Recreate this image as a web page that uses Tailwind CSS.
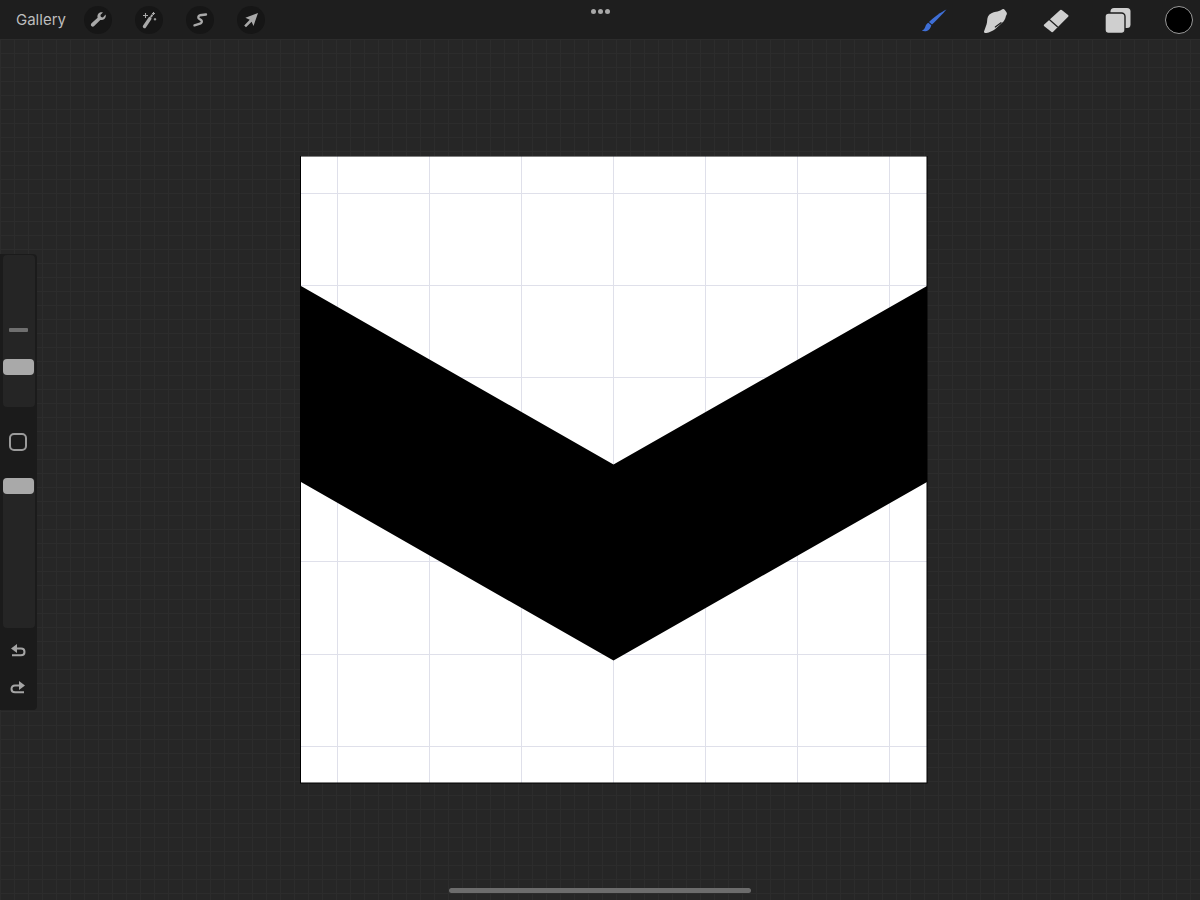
<!DOCTYPE html>
<html lang="en">
<head>
    <meta charset="UTF-8">
    <title>Procreate canvas</title>
    <script src="https://cdn.jsdelivr.net/npm/@tailwindcss/browser@4"></script>
</head>
<body class="antialiased">
<div class="relative w-[1200px] h-[900px] overflow-hidden flex flex-col bg-[#262626] font-['Inter','Liberation_Sans',sans-serif]">

    <!-- Top bar -->
    <header class="h-[39px] shrink-0 bg-[#1e1e1e] grid grid-cols-[1fr_auto_1fr] items-center px-[16px]">
        <div class="flex items-center">
            <span class="text-[15px] leading-none text-[#bdbdbd] w-[68px]">Gallery</span>
            <div class="flex gap-[23px]">
                <span class="w-[28px] h-[28px] rounded-full bg-[#161616] flex items-center justify-center">
                    <svg width="18" height="18" viewBox="0 0 18 18"><path fill="#a9a9a9" d="M16.600 3.600c.5 1.700 0 3.400-1.300 4.500-1.100 1-2.600 1.200-4 .8L5.200 15c-.8.8-2 .9-2.800.1-.8-.8-.7-2 .1-2.800L8.600 6.700c-.4-1.400-.1-3 .9-4.100 1.100-1.200 2.800-1.700 4.400-1.200l-2.500 2.500.5 2 2 .5z"/></svg>
                </span>
                <span class="w-[28px] h-[28px] rounded-full bg-[#161616] flex items-center justify-center">
                    <svg width="18" height="18" viewBox="0 0 18 18"><path stroke="#a9a9a9" stroke-width="3.400" stroke-linecap="round" d="M4.500 15.500 9.800 7.600"/><path stroke="#a9a9a9" stroke-width="2" stroke-linecap="round" d="M11.200 5.500 12 4.300"/><path stroke="#a9a9a9" stroke-width="1.100" d="M5.500 2v5M3 4.500h5M13.500 1v3M12 2.500h3M15 7v2.400M13.800 8.200h2.400"/></svg>
                </span>
                <span class="w-[28px] h-[28px] rounded-full bg-[#161616] flex items-center justify-center">
                    <svg width="18" height="18" viewBox="0 0 18 18" fill="none" stroke="#a9a9a9" stroke-width="2.400" stroke-linecap="round" stroke-linejoin="round"><path d="M15 3.500 8.800 4.300C7.300 4.700 6.800 6.500 8 7.600L10.300 9.300C11.500 10.600 10.500 12.100 9 12.600L3.500 14.300"/></svg>
                </span>
                <span class="w-[28px] h-[28px] rounded-full bg-[#161616] flex items-center justify-center">
                    <svg width="18" height="18" viewBox="0 0 18 18"><path fill="#a9a9a9" d="M16 2 11.500 15 9.600 10.800 4 16.200 2.200 14.400 7.700 8.800 3.400 6.800z"/></svg>
                </span>
            </div>
        </div>
        <div class="flex gap-[2px] pb-[16px]">
            <span class="w-[5px] h-[5px] rounded-full bg-[#a8a8a8]"></span>
            <span class="w-[5px] h-[5px] rounded-full bg-[#a8a8a8]"></span>
            <span class="w-[5px] h-[5px] rounded-full bg-[#a8a8a8]"></span>
        </div>
        <div class="flex items-center justify-end gap-[31px] -mr-[9px]">
            <svg width="30" height="30" viewBox="0 0 30 30"><path fill="#3f6fd6" d="M27.500 4.500C24 8.500 18 15 13 19.500l-3-2.400C14.500 12.500 22 7 27.500 4.500z"/><path fill="#3f6fd6" d="M9.300 17.800l3 2.400c-.6 2.800-2.400 5-4.500 5.700-1.500.5-3.500.2-5-.1 1.800-.8 2.900-2.200 3.500-4 .5-1.700 1.400-3.100 3-4z"/></svg>
            <svg width="30" height="30" viewBox="0 0 30 30"><path fill="#cfcfcf" d="M4 26.500 6.500 19.500C7.500 17 6.800 14 8 11.500 9.500 8.500 13 7.500 16 6.800 18 6.300 20 6 21.500 4.800 22.800 3.600 24 3.800 24.800 5L26.500 7.300C27.300 8.500 26.800 9.800 26 10.800 25.500 12.800 25 14.800 23.500 16.500L15 24.300C12.500 26 9.500 27.500 6.500 28 4.800 28.300 3.700 27.500 4 26.500z"/><path fill="none" stroke="#1e1e1e" stroke-width="1.200" stroke-linecap="round" d="M21 17.700 15.300 22"/></svg>
            <svg width="30" height="30" viewBox="0 0 30 30"><path fill="#cfcfcf" stroke="#cfcfcf" stroke-width="2.400" stroke-linejoin="round" d="M20 6 26.300 11 11.300 26 4 20.300z"/><path fill="none" stroke="#1e1e1e" stroke-width="1.200" d="M8 14.300 16.700 22"/></svg>
            <svg width="30" height="30" viewBox="0 0 30 30"><rect x="8.500" y="3" width="20" height="20" rx="3.500" fill="#cfcfcf"/><rect x="3" y="8" width="20" height="20.500" rx="3.500" fill="#cfcfcf" stroke="#1e1e1e" stroke-width="1.400"/></svg>
            <span class="ml-[2px] w-[28px] h-[28px] rounded-full bg-black border-[1.5px] border-[#9a9a9a]"></span>
        </div>
    </header>

    <!-- Workspace with faint grid -->
    <main class="flex-1 pl-[300px] pt-[117px] bg-[#262626] bg-[linear-gradient(#2c2c2c_1px,transparent_1px),linear-gradient(90deg,#2c2c2c_1px,transparent_1px)] bg-[size:14px_14px]">
        <svg class="block" width="628" height="628" viewBox="300 156 628 628">
            <rect x="301" y="156" width="626" height="627" fill="#fff"/>
            <g stroke="#dfe0ea" stroke-width="1">
                <path d="M337.500 156v627M429.500 156v627M521.500 156v627M613.500 156v627M705.500 156v627M797.500 156v627M889.500 156v627"/>
                <path d="M301 193.500h626M301 285.500h626M301 377.500h626M301 469.500h626M301 561.500h626M301 654.500h626M301 746.500h626"/>
            </g>
            <path d="M301 286 613.500 464.500 927 286V482L613.500 660.500 301 482z" fill="#000"/>
            <rect x="300.500" y="156" width="626.500" height="627" fill="none" stroke="#000" stroke-width="1"/>
        </svg>
    </main>

    <!-- Left sidebar -->
    <aside class="absolute left-0 top-[254px] w-[37px] h-[456px] bg-[#1b1b1b] rounded-r-[4px] flex flex-col pl-[3px] pr-[2px] pt-[1px]">
        <div class="relative h-[152px] w-[32px] bg-[#252525] rounded-[4px]">
            <span class="absolute left-[6px] top-[73px] w-[19px] h-[4px] rounded-[1px] bg-[#6f6f6f]"></span>
            <span class="absolute left-0 top-[104px] w-[31px] h-[16px] rounded-[4px] bg-[#a9a9a9]"></span>
        </div>
        <div class="h-[71px] flex justify-center pt-[26px] pr-[2px]">
            <span class="w-[18px] h-[18px] rounded-[5px] border-[2px] border-[#9b9b9b] bg-[#1b1b1b]"></span>
        </div>
        <div class="relative h-[150px] w-[32px] bg-[#252525] rounded-[4px]">
            <span class="absolute left-0 top-0 w-[31px] h-[16px] rounded-[4px] bg-[#a9a9a9]"></span>
        </div>
        <div class="flex flex-col items-center gap-[17px] pr-[3px] pt-[14px]">
            <svg width="18" height="20" viewBox="0 0 18 20" fill="none"><path fill="#a5a5a5" d="M2 6.500 8 2v9z"/><path stroke="#a5a5a5" stroke-width="2" d="M7 6.500h5c2.300 0 3.500 1.500 3.500 3.400s-1.200 3.400-3.500 3.400H3"/></svg>
            <svg width="18" height="20" viewBox="0 0 18 20" fill="none"><path fill="#a5a5a5" d="M16 6.500 10 2v9z"/><path stroke="#a5a5a5" stroke-width="2" d="M11 6.500H6C3.700 6.500 2.500 8 2.500 9.900s1.200 3.400 3.500 3.400h9"/></svg>
        </div>
    </aside>

    <!-- Home indicator -->
    <div class="absolute left-[449px] bottom-[7px] w-[302px] h-[5px] rounded-full bg-[#6c6c6c]"></div>
</div>
</body>
</html>
